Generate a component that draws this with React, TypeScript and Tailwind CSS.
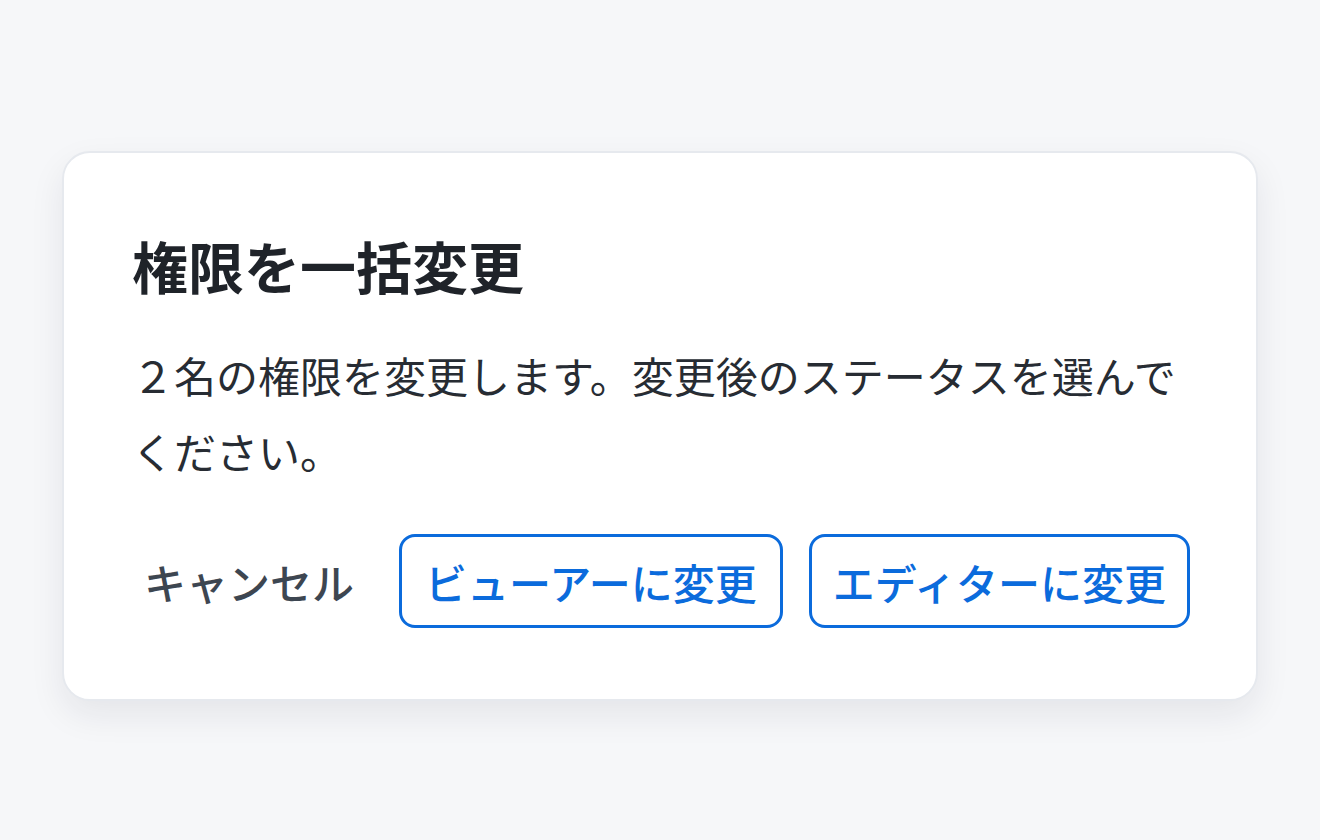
export default function App() {
  return (
    <div
      className="flex min-h-screen justify-center bg-[#f6f7f9] pt-[151px]"
      style={{ fontFamily: '"Noto Sans CJK JP", "Noto Sans", sans-serif' }}
    >
      <div className="h-[550px] w-[1196px] rounded-[28px] border-2 border-[#e6e9ee] bg-white pl-[68px] pr-[60px] pt-[70px] shadow-[0_14px_34px_rgba(20,30,50,0.08)]">
        <h2 className="mb-[30px] text-[56px] font-bold leading-[84px] text-[#1f2329]">
          権限を一括変更
        </h2>
        <p className="pr-[10px] text-[42px] leading-[76px] text-[#272c33]">
          ２名の権限を変更します。変更後のステータスを選んでください。
        </p>
        <div className="mt-[45px] flex items-center whitespace-nowrap">
          <button className="mr-[33px] flex h-[94px] shrink-0 items-center px-3 text-[42px] font-medium text-[#3d4651]">
            キャンセル
          </button>
          <button className="mr-[26px] flex h-[94px] shrink-0 items-center rounded-[16px] border-[3px] border-[#0b6bdc] px-[23px] text-[42px] font-medium text-[#0b6bdc]">
            ビューアーに変更
          </button>
          <button className="flex h-[94px] shrink-0 items-center rounded-[16px] border-[3px] border-[#0b6bdc] px-[21px] text-[42px] font-medium text-[#0b6bdc]">
            エディターに変更
          </button>
        </div>
      </div>
    </div>
  );
}
